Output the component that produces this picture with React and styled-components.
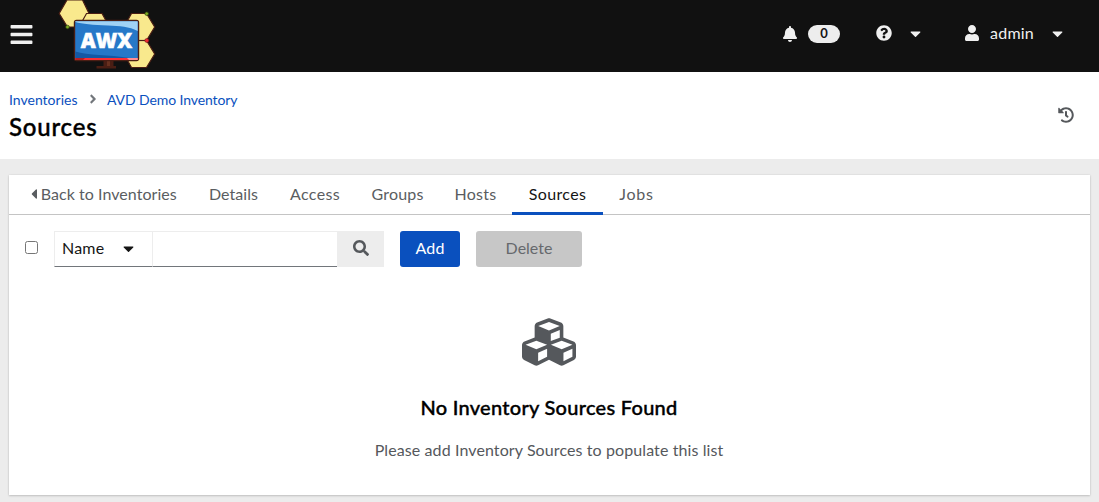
import React from "react";
import styled, { createGlobalStyle } from "styled-components";
import {
  FaBars,
  FaBell,
  FaQuestionCircle,
  FaCaretDown,
  FaCaretLeft,
  FaUser,
  FaAngleRight,
  FaHistory,
  FaSearch,
  FaCubes,
} from "react-icons/fa";

const GlobalStyle = createGlobalStyle`
  * { box-sizing: border-box; }
  body {
    margin: 0;
    background: #ececec;
    color: #151515;
    font-family: Lato, "Liberation Sans", sans-serif;
    font-size: 16px;
    line-height: 24px;
    overflow: hidden;
  }
  svg { display: block; flex: none; }
  button { font: inherit; border: 0; padding: 0; background: none; cursor: pointer; }
`;

const Page = styled.div`
  display: flex;
  flex-direction: column;
  height: 502px;
`;

const Masthead = styled.header`
  display: flex;
  align-items: center;
  height: 72px;
  padding: 0 33px 4px 9px;
  background: #111;
  color: #f0f0f0;
`;

const MenuButton = styled.button`
  display: flex;
  width: 24px;
  color: #f0f0f0;
`;

const Brand = styled.a`
  align-self: flex-start;
  margin-left: 17px;
  margin-right: auto;
`;

const HeaderTool = styled.button`
  display: flex;
  align-items: center;
  color: #f0f0f0;
  margin-left: ${(p) => p.$before || 0}px;
  padding-bottom: ${(p) => p.$lift || 0}px;
`;

const Count = styled.span`
  width: 32px;
  height: 18px;
  margin-left: 10px;
  border-radius: 9px;
  background: #ededed;
  color: #151515;
  font-size: 13px;
  font-weight: 700;
  line-height: 17px;
  text-align: center;
`;

const UserName = styled.span`
  width: 44px;
  margin-left: 10px;
  letter-spacing: 0.2px;
  white-space: nowrap;
`;

const MenuCaret = styled(FaCaretDown).attrs({ size: 17 })`
  margin-left: ${(p) => (p.$tight ? 14 : 15)}px;
`;

const PageHeader = styled.section`
  display: flex;
  align-items: center;
  justify-content: space-between;
  height: 87px;
  padding: 0 25px 2px 9px;
  background: #fff;
  color: #55585c;
`;

const Titles = styled.div`
  padding-top: 1px;
`;

const Breadcrumb = styled.nav`
  display: flex;
  align-items: center;
  height: 21px;
  font-size: 14px;
  line-height: 21px;
`;

const Crumb = styled.a`
  color: #0a50be;
  white-space: nowrap;
  width: ${(p) => p.$width}px;
  letter-spacing: ${(p) => p.$track}px;
`;

const Separator = styled(FaAngleRight)`
  margin: 0 7px 0 8px;
  color: #72767b;
`;

const Title = styled.h1`
  margin: 1px 0 0;
  color: #000;
  font-size: 24px;
  font-weight: 500;
  line-height: 31px;
  letter-spacing: 0.8px;
  -webkit-text-stroke: 0.4px #000;
`;

const Card = styled.main`
  display: flex;
  flex-direction: column;
  height: 320px;
  margin: 16px 9px 0;
  background: #fff;
  box-shadow: 0 1px 2px rgba(3, 3, 3, 0.16), 0 0 2px rgba(3, 3, 3, 0.1);
`;

const Tabs = styled.nav`
  display: flex;
  height: 40px;
  padding-left: 5px;
  border-bottom: 1px solid #c4c4c4;
`;

const Tab = styled.a`
  display: flex;
  align-items: center;
  justify-content: center;
  width: ${(p) => p.$width}px;
  height: 40px;
  padding: 0 ${(p) => p.$end || 0}px 2px 0;
  white-space: nowrap;
  letter-spacing: ${(p) => p.$track || 0}px;
  color: ${(p) => (p.$current ? "#151515" : "#5a5d61")};
  box-shadow: ${(p) => (p.$current ? "inset 0 -3px 0 #0a50be" : "none")};
`;

const BackCaret = styled(FaCaretLeft).attrs({ size: 16 })`
  margin-right: -1px;
`;

const Toolbar = styled.div`
  display: flex;
  align-items: center;
  height: 36px;
  margin: 16px 0 0 16px;
`;

const SelectAll = styled.input.attrs({ type: "checkbox" })`
  width: 13px;
  height: 13px;
  margin: 0 16px 3px 0;
`;

const FieldSelect = styled.button`
  display: flex;
  align-items: center;
  width: 98px;
  height: 36px;
  padding: 0 0 2px 7px;
  color: #151515;
  border: 1px solid #ededed;
  border-right: 0;
  border-bottom-color: #72767b;
`;

const FieldName = styled.span`
  width: 44px;
  text-align: left;
  letter-spacing: 0.2px;
`;

const SearchInput = styled.input`
  width: 185px;
  height: 36px;
  padding: 0 8px;
  border: 1px solid #ededed;
  border-right: 0;
  border-bottom-color: #72767b;
  border-radius: 0;
  font: inherit;
  outline: none;
`;

const SearchButton = styled.button`
  display: flex;
  align-items: center;
  justify-content: center;
  width: 47px;
  height: 36px;
  padding: 0 0 2px 0;
  background: #ededed;
  color: #55585c;
`;

const Action = styled.button`
  width: ${(p) => p.$width}px;
  height: 36px;
  margin-left: 16px;
  padding-bottom: 2px;
  border-radius: 3px;
  background: ${(p) => (p.disabled ? "#c7c7c7" : "#0a50be")};
  color: ${(p) => (p.disabled ? "#66696d" : "#fff")};
  letter-spacing: ${(p) => p.$track || 0}px;
`;

const EmptyState = styled.section`
  display: flex;
  flex-direction: column;
  align-items: center;
  padding: 48px 1px 0 0;
  color: #55585c;
`;

const EmptyTitle = styled.h2`
  margin: 23px 0 0;
  color: #000;
  font-size: 20px;
  font-weight: 500;
  line-height: 30px;
  letter-spacing: 0.28px;
  -webkit-text-stroke: 0.4px #000;
`;

const EmptyBody = styled.p`
  margin: 16px 0 0;
  letter-spacing: 0.1px;
`;

function Hexagon({ points }) {
  return <polygon points={points} fill="#f9e98d" stroke="#4a1e14" strokeWidth="1.2" />;
}

function AwxLogo() {
  return (
    <svg width="110" height="72" viewBox="0 0 110 72" role="img" aria-label="AWX">
      <Hexagon points="9.2,13.5 17,0 32.5,0 39,13.5 31.5,27 17.5,27" />
      <Hexagon points="29,27 36.5,13.5 52,13.5 59.5,27 52,40 36.5,40" />
      <Hexagon points="74,27 81.5,13.5 96.5,13.5 104.7,27 96.5,40.5 81.5,40.5" />
      <Hexagon points="74,54 81.5,40.5 96.5,40.5 104.7,54 96.5,67.5 81.5,67.5" />
      <path d="M88 40.5h8" stroke="#4a1e14" strokeWidth="1.2" />
      <circle cx="17.5" cy="27" r="1.8" fill="#7eae21" stroke="#31400e" strokeWidth=".7" />
      <circle cx="96.7" cy="13.7" r="1.8" fill="#7eae21" stroke="#31400e" strokeWidth=".7" />
      <circle cx="96.8" cy="40.5" r="2" fill="#ed2930" stroke="#771318" strokeWidth=".6" />
      <path d="M53.5 60h10v6h2.5v2.5H46.5V66h7z" fill="#4a1e14" />
      <path d="M57 61h3v5h-3z" fill="#68301f" />
      <rect x="24.5" y="20.5" width="64" height="40" rx="2" fill="#2678c8" stroke="#4a1e14" strokeWidth="1.4" />
      <path d="M25.3 21.3H87.7V31C79 26.5 70 26 58 25.5C43 25 32 24 25.3 22z" fill="#a0d2f4" />
      <path d="M25.3 51.5C38 55.5 58 54.5 80 58H25.3z" fill="#1458a4" />
      <path d="M25.3 58H87.7v2H25.3z" fill="#fb2f36" />
      <path d="M25.3 58H35l-2 2h-7.7z" fill="#b51e25" />
      <path d="M77 58h10.7v2H79z" fill="#ff8e94" />
      <text
        x="30.7"
        y="47.8"
        fill="#fff"
        stroke="#fff"
        strokeWidth=".5"
        fontFamily="'Open Sans', sans-serif"
        fontSize="20.5"
        fontWeight="800"
        textLength="51.5"
        lengthAdjust="spacingAndGlyphs"
      >
        AWX
      </text>
    </svg>
  );
}

const tabs = [
  { label: "Details", width: 81, track: 0.05 },
  { label: "Access", width: 82, track: 0.35 },
  { label: "Groups", width: 83, track: 0.2 },
  { label: "Hosts", width: 73, track: 0.25 },
  { label: "Sources", width: 91, track: 0.35, current: true },
  { label: "Jobs", width: 67, track: 0.8 },
];

export default function App() {
  return (
    <Page>
      <GlobalStyle />
      <Masthead>
        <MenuButton aria-label="Global navigation">
          <FaBars size={25} />
        </MenuButton>
        <Brand>
          <AwxLogo />
        </Brand>
        <HeaderTool>
          <FaBell size={16} />
          <Count>0</Count>
        </HeaderTool>
        <HeaderTool $before={36} $lift={2}>
          <FaQuestionCircle size={16} />
          <MenuCaret />
        </HeaderTool>
        <HeaderTool $before={40} $lift={2}>
          <FaUser size={16} />
          <UserName>admin</UserName>
          <MenuCaret />
        </HeaderTool>
      </Masthead>
      <PageHeader>
        <Titles>
          <Breadcrumb>
            <Crumb $width={69} $track={0}>Inventories</Crumb>
            <Separator size={14} />
            <Crumb $width={131} $track={-0.1}>AVD Demo Inventory</Crumb>
          </Breadcrumb>
          <Title>Sources</Title>
        </Titles>
        <FaHistory size={16} />
      </PageHeader>
      <Card>
        <Tabs>
          <Tab $width={179} $end={4.5} $track={0.05}>
            <BackCaret />
            Back to Inventories
          </Tab>
          {tabs.map((t) => (
            <Tab key={t.label} $width={t.width} $track={t.track} $current={t.current}>
              {t.label}
            </Tab>
          ))}
        </Tabs>
        <Toolbar>
          <SelectAll aria-label="Select all" />
          <FieldSelect>
            <FieldName>Name</FieldName>
            <MenuCaret $tight />
          </FieldSelect>
          <SearchInput aria-label="Search text input" />
          <SearchButton aria-label="Search">
            <FaSearch size={16} />
          </SearchButton>
          <Action $width={60} $track={0.2}>Add</Action>
          <Action $width={106} disabled>Delete</Action>
        </Toolbar>
        <EmptyState>
          <FaCubes size={54} />
          <EmptyTitle>No Inventory Sources Found</EmptyTitle>
          <EmptyBody>Please add Inventory Sources to populate this list</EmptyBody>
        </EmptyState>
      </Card>
    </Page>
  );
}
